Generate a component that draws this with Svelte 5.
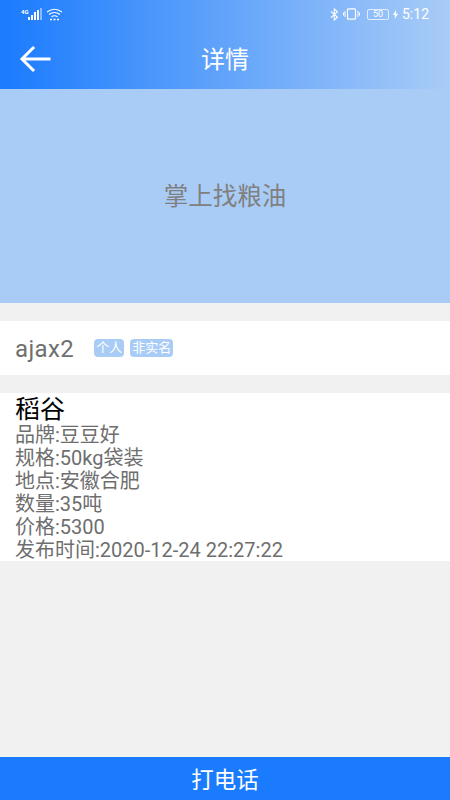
<script>
  const specs = [
    '品牌:豆豆好',
    '规格:50kg袋装',
    '地点:安徽合肥',
    '数量:35吨',
    '价格:5300',
    '发布时间:2020-12-24 22:27:22'
  ]
</script>

<div class="page">
  <header class="top">
    <div class="status">
      <div class="status-left">
        <span class="net">4G</span>
        <svg width="15" height="14" viewBox="0 0 15 14">
          <rect x="0" y="10" width="2" height="3" fill="#fff" />
          <rect x="3" y="8" width="2" height="5" fill="#fff" />
          <rect x="6" y="5" width="2" height="8" fill="#fff" />
          <rect x="9" y="3" width="2" height="10" fill="#fff" />
          <rect x="12" y="1" width="2" height="12" fill="#fff" opacity="0.45" />
        </svg>
        <svg class="wifi" width="17" height="13" viewBox="0 0 17 13" fill="none" stroke="#fff" stroke-width="1.1">
          <path d="M1 4 Q8.5 -1.5 16 4" />
          <path d="M3 6.5 Q8.5 2.5 14 6.5" />
          <path d="M5.5 8.8 Q8.5 6.8 11.5 8.8" />
          <path d="M4 11.5h9" stroke-width="1.6" stroke-dasharray="2 1.5" />
        </svg>
      </div>
      <div class="status-right">
        <svg width="9" height="13" viewBox="0 0 9 13" fill="none" stroke="#fff" stroke-width="1.1">
          <path d="M1 3.5 7.5 9.2 4.3 12V1L7.5 3.8 1 9.5" />
        </svg>
        <svg class="vibrate" width="17" height="12" viewBox="0 0 17 12" fill="none" stroke="#fff">
          <rect x="4.5" y="0.8" width="8" height="10.4" rx="1" stroke-width="1.2" />
          <path d="M2 3v6M0.5 4.5v3M15 3v6M16.5 4.5v3" stroke-width="1" />
        </svg>
        <span class="battery"><span>50</span></span>
        <svg class="bolt" width="5" height="9" viewBox="0 0 5 9"><path d="M3 0 0 5h2L1.6 9 5 3.8H3z" fill="#fff" /></svg>
        <span class="clock">5:12</span>
      </div>
    </div>
    <div class="nav">
      <svg class="back" width="32" height="28" viewBox="0 0 32 28" fill="none" stroke="#fff" stroke-width="3" stroke-linecap="square">
        <path d="M14 3 3 14l11 11M4 14h26" />
      </svg>
      <h1>详情</h1>
    </div>
  </header>

  <div class="banner">掌上找粮油</div>

  <section class="user">
    <span class="name">ajax2</span>
    <span class="tag first">个人</span>
    <span class="tag">非实名</span>
  </section>

  <section class="detail">
    <h2>稻谷</h2>
    {#each specs as line}
      <p>{line}</p>
    {/each}
  </section>

  <div class="spacer"></div>

  <button class="call">打电话</button>
</div>

<style>
  :global(body) {
    margin: 0;
  }

  .page {
    width: 450px;
    height: 800px;
    display: flex;
    flex-direction: column;
    background: #f1f1f1;
    font-family: Roboto, "Noto Sans CJK SC", sans-serif;
    overflow: hidden;
  }

  .top {
    height: 89px;
    flex: none;
    background: linear-gradient(to right, #1a7bfe, #a9ccf7);
    color: #fff;
  }

  .status {
    height: 28px;
    display: flex;
    justify-content: space-between;
    align-items: center;
    padding: 0 21px;
  }

  .status-left,
  .status-right {
    display: flex;
    align-items: center;
  }

  .net {
    font-size: 6px;
    font-weight: bold;
    margin-right: -1px;
    margin-top: -6px;
  }

  .wifi {
    margin-left: 3px;
  }

  .vibrate {
    margin-left: 4px;
  }

  .battery {
    width: 20px;
    height: 9px;
    margin-left: 7px;
    border: 1px solid rgba(255, 255, 255, 0.7);
    border-radius: 2px;
    font-size: 9px;
    line-height: 9px;
    text-align: center;
  }

  .bolt {
    margin-left: 4px;
  }

  .clock {
    font-size: 14px;
    margin-left: 4px;
  }

  .nav {
    height: 61px;
    display: flex;
    align-items: center;
    justify-content: center;
    position: relative;
  }

  .back {
    position: absolute;
    left: 19px;
    top: 17px;
  }

  h1 {
    margin: 0;
    font-size: 24px;
    font-weight: normal;
    margin-top: -2px;
  }

  .banner {
    height: 214px;
    flex: none;
    padding-bottom: 3px;
    box-sizing: border-box;
    background: #a9ccf7;
    color: #808080;
    font-size: 24.5px;
    display: flex;
    align-items: center;
    justify-content: center;
  }

  .user {
    height: 54px;
    flex: none;
    margin-top: 18px;
    background: #fff;
    display: flex;
    align-items: center;
    padding-left: 15px;
  }

  .name {
    font-size: 24px;
    color: #6f6f6f;
    margin-top: 2px;
    margin-right: 20px;
    letter-spacing: 0.4px;
  }

  .tag {
    height: 18px;
    padding: 0 2px;
    background: #a9ccf7;
    color: #fff;
    font-size: 13px;
    line-height: 18px;
    border-radius: 4px;
  }

  .first {
    margin-right: 6px;
  }

  .detail {
    flex: none;
    margin-top: 18px;
    height: 168px;
    background: #fff;
    padding-left: 15px;
    box-sizing: border-box;
  }

  h2 {
    margin: 0;
    height: 31px;
    font-size: 25px;
    line-height: 33px;
    font-weight: normal;
    color: #000;
  }

  p {
    margin: 0;
    height: 23px;
    font-size: 20px;
    line-height: 23px;
    color: #6e6e6e;
  }

  .spacer {
    flex: 1;
  }

  .call {
    height: 43px;
    flex: none;
    border: 0;
    padding: 0 0 2px;
    background: #1a7bfe;
    color: #fff;
    font-family: inherit;
    font-size: 22.5px;
  }
</style>
